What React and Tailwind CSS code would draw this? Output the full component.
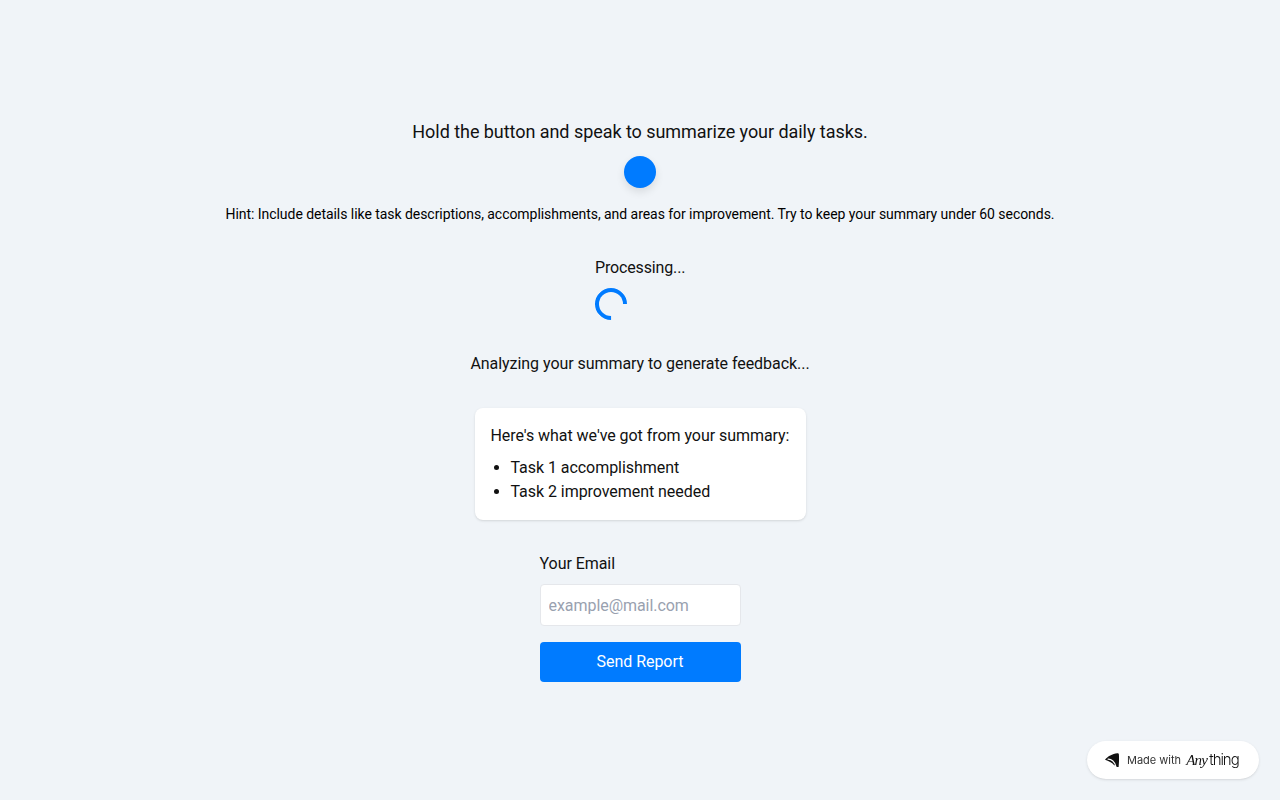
// Daily summary recorder screen
const Logo = () => (
  <svg width="14" height="14" viewBox="0 0 14 14" className="shrink-0">
    <path d="M0 6.8 C2.6 3.2 7.4 0.8 12.4 0.2 C13.4 0 13.8 0.6 13.9 1.6 C14.2 6 14 10 13.6 14 L11.6 14 C10.6 12.6 9.6 12.2 9 12 C7 9.8 3.6 7.8 0 6.8 Z" fill="#111" />
    <path d="M2.6 6.2 C6.4 5.8 10 8.8 11 13.8" fill="none" stroke="#fff" strokeWidth="1.1" />
  </svg>
);

const App = () => (
  <div className="relative min-h-screen flex flex-col items-center justify-center bg-[#f0f4f8] text-[#111] tracking-[-0.05px] font-['Roboto',sans-serif]">
    <h1 className="text-lg leading-7 mb-[10px]">Hold the button and speak to summarize your daily tasks.</h1>
    <button className="w-8 h-8 rounded-full bg-[#007bff] shadow-[0_4px_8px_rgba(0,0,0,0.1)] mb-4" />
    <p className="text-sm leading-5 text-black mb-8">
      Hint: Include details like task descriptions, accomplishments, and areas for improvement. Try to keep your summary under 60 seconds.
    </p>

    <div className="flex flex-col w-[90px] mb-8">
      <p className="leading-6 mb-2 whitespace-nowrap tracking-[-0.15px]">Processing...</p>
      <div className="w-8 h-8 rounded-full border-4 border-[#007bff] border-r-transparent rotate-45" />
    </div>

    <p className="leading-6 mb-8">Analyzing your summary to generate feedback...</p>

    <div className="w-[331px] bg-white rounded-lg shadow p-4 mb-8">
      <p className="leading-6 mb-2 whitespace-nowrap">Here's what we've got from your summary:</p>
      <ul className="list-disc pl-5 leading-6">
        <li>Task 1 accomplishment</li>
        <li>Task 2 improvement needed</li>
      </ul>
    </div>

    <div className="flex flex-col w-[201px]">
      <label className="leading-6 mb-2">Your Email</label>
      <input
        type="email"
        placeholder="example@mail.com"
        className="w-full h-[42px] px-2 bg-white border border-gray-200 rounded mb-4 outline-none placeholder:text-gray-400"
      />
      <button className="h-10 w-full rounded bg-[#007bff] text-white">Send Report</button>
    </div>

    <div className="fixed right-[21px] bottom-[21px] h-[38px] w-[172px] flex items-center pl-[18px] bg-white rounded-full shadow tracking-normal">
      <Logo />
      <span className="ml-2 text-[11px] text-[#333] font-['Inter',sans-serif] whitespace-nowrap">Made with</span>
      <span className="ml-[5px] flex items-baseline text-[#111] whitespace-nowrap">
        <span className="font-['Liberation_Serif',serif] italic text-[15px] tracking-[-0.05em]">Any</span>
        <span className="ml-[2px] font-['Inter',sans-serif] font-light text-[15px] tracking-[-0.07em]">thing</span>
      </span>
    </div>
  </div>
);

export default App;
